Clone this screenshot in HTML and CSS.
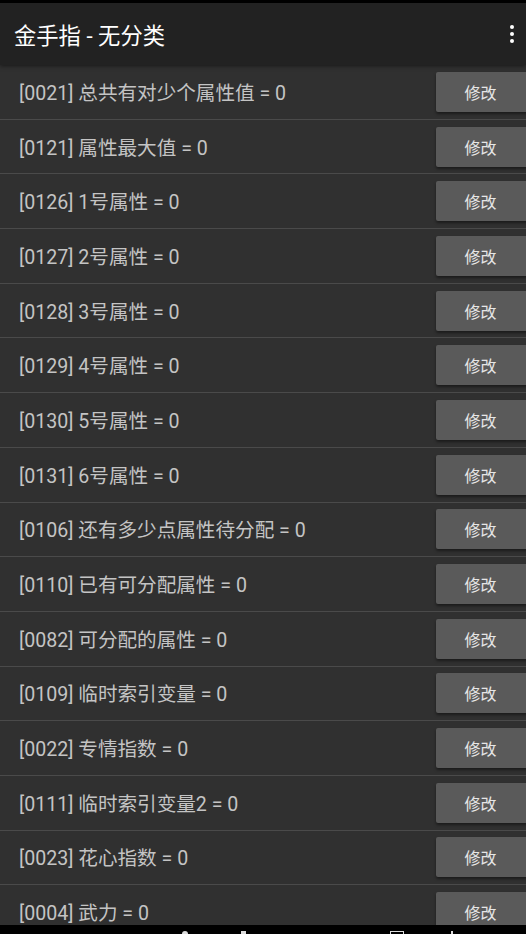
FILE: index.html
```html
<!DOCTYPE html>
<html lang="zh">
<head>
  <meta charset="UTF-8">
  <title>金手指</title>
  <link rel="stylesheet" href="styles.css">
</head>
<body>
  <div class="status"></div>

  <div class="toolbar">
    <h1>金手指 - 无分类</h1>
    <div class="menu"><span></span><span></span><span></span></div>
  </div>

  <div class="list">
    <div class="row"><span>[0021] 总共有对少个属性值 = 0</span><button>修改</button></div>
    <div class="row"><span>[0121] 属性最大值 = 0</span><button>修改</button></div>
    <div class="row"><span>[0126] 1号属性 = 0</span><button>修改</button></div>
    <div class="row"><span>[0127] 2号属性 = 0</span><button>修改</button></div>
    <div class="row"><span>[0128] 3号属性 = 0</span><button>修改</button></div>
    <div class="row"><span>[0129] 4号属性 = 0</span><button>修改</button></div>
    <div class="row"><span>[0130] 5号属性 = 0</span><button>修改</button></div>
    <div class="row"><span>[0131] 6号属性 = 0</span><button>修改</button></div>
    <div class="row"><span>[0106] 还有多少点属性待分配 = 0</span><button>修改</button></div>
    <div class="row"><span>[0110] 已有可分配属性 = 0</span><button>修改</button></div>
    <div class="row"><span>[0082] 可分配的属性 = 0</span><button>修改</button></div>
    <div class="row"><span>[0109] 临时索引变量 = 0</span><button>修改</button></div>
    <div class="row"><span>[0022] 专情指数 = 0</span><button>修改</button></div>
    <div class="row"><span>[0111] 临时索引变量2 = 0</span><button>修改</button></div>
    <div class="row"><span>[0023] 花心指数 = 0</span><button>修改</button></div>
    <div class="row"><span>[0004] 武力 = 0</span><button>修改</button></div>
  </div>

  <div class="navbar">
    <i class="nav-a"></i><i class="nav-b"></i><i class="nav-c"></i><i class="nav-d"></i>
  </div>
</body>
</html>
```

FILE: styles.css
```css
body {
  margin: 0;
  width: 526px;
  height: 934px;
  overflow: hidden;
  background-color: #303030;
  font-family: Roboto, "Noto Sans CJK SC", sans-serif;
  position: relative;
}

.status {
  height: 3px;
  background: #000;
}

.toolbar {
  height: 62px;
  background: #222;
  display: flex;
  align-items: center;
  justify-content: space-between;
  padding: 0 14px;
  box-shadow: 0 1px 4px rgba(0, 0, 0, 0.5);
  position: relative;
  z-index: 1;
}

.toolbar h1 {
  margin: 0;
  color: #fff;
  font-size: 22.3px;
  font-weight: normal;
}

.menu {
  display: flex;
  flex-direction: column;
  gap: 3px;
  margin-right: -2px;
}

.menu span {
  width: 4px;
  height: 4px;
  border-radius: 50%;
  background: #fff;
}

.list {
  display: flex;
  flex-direction: column;
}

.row {
  height: 53.7px;
  border-bottom: 1px solid #4a4a4a;
  display: flex;
  align-items: center;
  justify-content: space-between;
  padding-left: 19px;
}

.row span {
  color: #c4c4c4;
  font-size: 19.6px;
  margin-top: -1px;
}

.row button {
  width: 92px;
  height: 40px;
  margin-right: -2px;
  border: none;
  border-radius: 2px;
  background: #5a5a5a;
  color: #e6e6e6;
  font-family: Roboto, "Noto Sans CJK SC", sans-serif;
  font-size: 16px;
  box-shadow: 0 2px 3px rgba(0, 0, 0, 0.45);
  padding: 0 3px 0 0;
}

.navbar {
  position: absolute;
  left: 0;
  right: 0;
  bottom: 0;
  height: 9px;
  background: #000;
}

.navbar i {
  position: absolute;
  top: 6px;
  background: #ddd;
}

.nav-a { left: 182px; width: 6px; height: 3px; border-radius: 3px 3px 0 0; }
.nav-b { left: 241px; width: 5px; height: 3px; }
.nav-c { left: 390px; width: 12px; height: 3px; background: transparent !important; border: 1px solid #ddd; border-bottom: none; }
.nav-d { left: 451px; width: 2px; height: 3px; }
```
